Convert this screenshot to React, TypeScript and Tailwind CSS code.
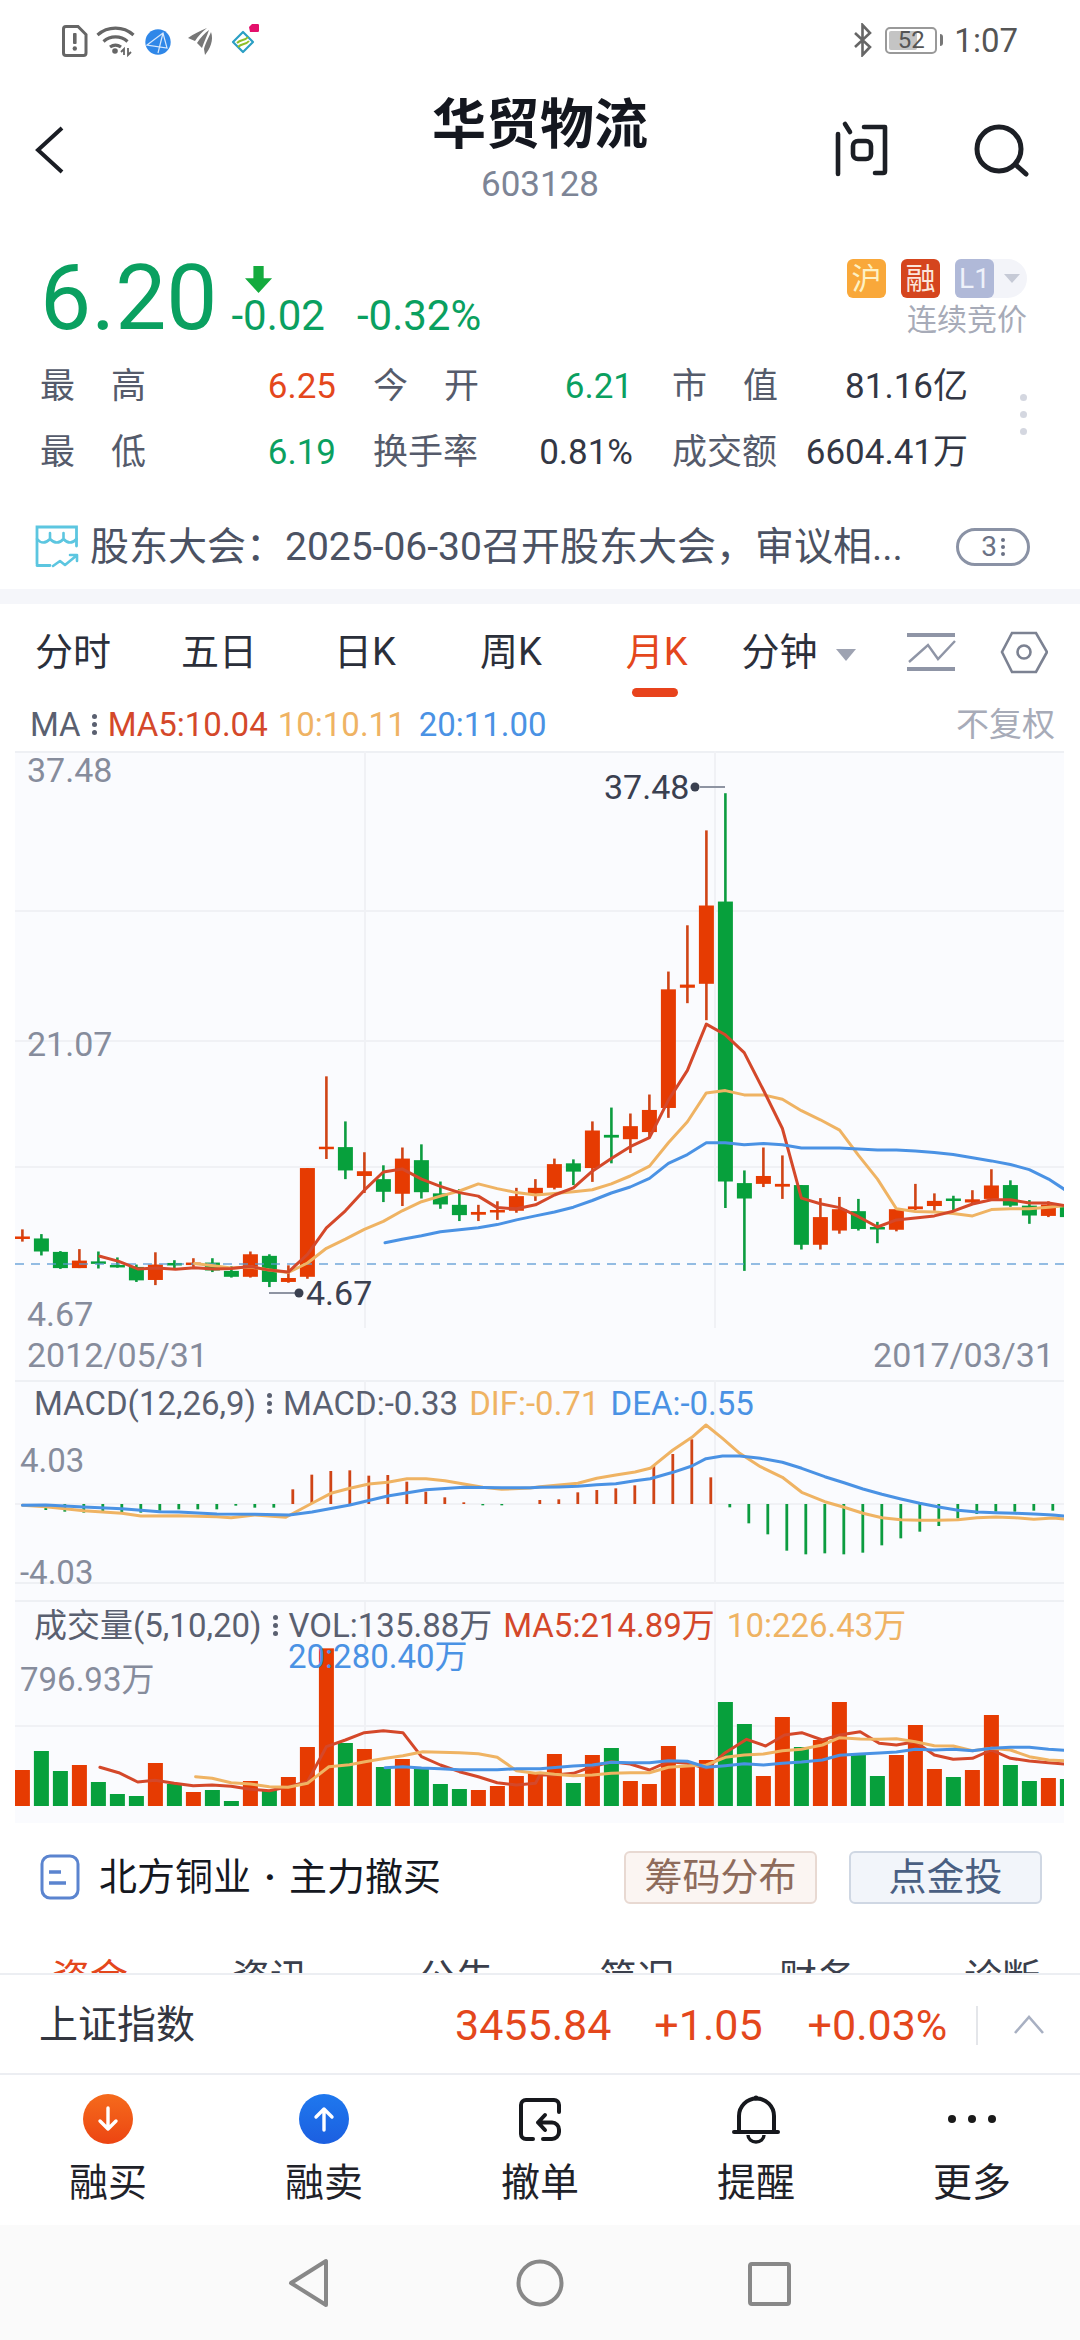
import React from "react";

type C = [number, number, number, number, number];
const R = 1, G = 0;
// zoom-space: [color, hi, top, bottom, lo]
const candles: C[] = [
  [R,1187,1205,1211,1218],[G,1199,1210,1243,1253],[G,1242,1244,1285,1287],[R,1237,1266,1285,1285],[G,1243,1268,1274,1286],
  [G,1258,1277,1282,1284],[G,1276,1282,1316,1320],[R,1245,1276,1315,1328],[G,1265,1272,1276,1285],[R,1260,1271,1276,1282],
  [G,1260,1271,1291,1295],[G,1280,1292,1307,1309],[R,1243,1250,1307,1309],[G,1250,1254,1320,1333],[R,1278,1310,1320,1322],
  [R,1032,1032,1307,1312],[R,800,978,984,1009],[G,914,979,1038,1060],[R,992,1040,1052,1095],[G,1025,1060,1092,1118],
  [R,980,1008,1097,1128],[G,972,1012,1093,1109],[G,1066,1096,1124,1135],[G,1085,1125,1151,1166],[R,1125,1143,1150,1166],
  [R,1116,1138,1143,1163],[R,1082,1103,1140,1145],[R,1060,1082,1097,1115],[R,1008,1022,1082,1086],[G,1010,1020,1041,1075],
  [R,914,937,1032,1067],[G,879,948,955,1020],[R,894,926,959,994],[R,846,885,941,955],[R,535,580,880,905],
  [R,418,568,576,615],[R,178,368,566,658],[G,84,358,1066,1133],[G,1038,1070,1109,1292],[R,980,1052,1072,1080],
  [R,1000,1072,1079,1110],[G,1075,1075,1226,1238],[R,1108,1156,1226,1238],[R,1105,1136,1190,1198],[G,1110,1141,1186,1190],
  [G,1168,1181,1187,1222],[R,1135,1136,1188,1192],[R,1072,1129,1136,1138],[R,1096,1115,1128,1140],[G,1102,1109,1115,1138],
  [R,1088,1111,1119,1122],[R,1035,1076,1110,1112],[G,1063,1075,1127,1130],[G,1113,1127,1152,1173],[R,1116,1124,1153,1156],
  [G,1130,1130,1156,1156],
];
const cx = (i: number) => 22.4 + 19 * i;
const my = (z: number) => 760 + z / 2.529;
const ly = (z: number) => 1360 + z / 3;

type P = number[][];
const pts = (left: P, right: P, yf: (z: number) => number) =>
  [...left.map(([x, y]) => `${(x / 2.904).toFixed(1)},${yf(y).toFixed(1)}`),
   ...right.map(([x, y]) => `${(540 + x / 2.904).toFixed(1)},${yf(y).toFixed(1)}`)].join(" ");

const ma5 = pts([[290,1255],[345,1268],[400,1287],[455,1285],[510,1288],[565,1284],[620,1287],[671,1286],[727,1281],[782,1290],[837,1295],[893,1250],[948,1183],[1003,1140],[1058,1088],[1113,1042],[1168,1034],[1224,1060],[1279,1078],[1334,1094],[1389,1103],[1444,1132],[1500,1135],[1555,1125]],
  [[42,1100],[97,1082],[152,1040],[207,1008],[262,978],[318,955],[373,860],[428,785],[483,668],[538,695],[593,740],[649,835],[704,932],[759,1108],[814,1122],[870,1132],[925,1155],[980,1181],[1035,1163],[1090,1158],[1145,1153],[1200,1141],[1256,1123],[1311,1112],[1366,1112],[1421,1120],[1477,1120],[1523,1127]], my);
const ma10 = pts([[565,1273],[620,1279],[671,1285],[727,1282],[782,1290],[837,1296],[893,1272],[948,1235],[1003,1212],[1058,1187],[1113,1167],[1168,1140],[1224,1117],[1279,1103],[1334,1090],[1389,1072],[1444,1084],[1500,1094],[1555,1100]],
  [[42,1096],[97,1092],[152,1087],[207,1072],[262,1052],[318,1027],[373,968],[428,915],[483,842],[538,836],[593,847],[649,847],[704,858],[759,887],[814,910],[870,936],[925,1000],[980,1060],[1035,1135],[1090,1142],[1145,1143],[1200,1147],[1256,1153],[1311,1137],[1366,1135],[1421,1135],[1477,1131],[1523,1127]], my);
const ma20 = pts([[1118,1221],[1168,1212],[1224,1203],[1279,1193],[1334,1188],[1389,1183],[1444,1175],[1500,1163],[1555,1153]],
  [[42,1143],[97,1131],[152,1114],[207,1095],[262,1080],[318,1058],[373,1020],[428,998],[483,968],[538,968],[593,973],[649,970],[704,973],[759,981],[814,981],[870,981],[925,984],[980,986],[1035,986],[1090,989],[1145,993],[1200,998],[1256,1006],[1311,1014],[1366,1023],[1421,1036],[1477,1060],[1523,1086]], my);

const macd = [450,455,458,459,459,458,452,448,448,448,437,443,443,388,344,333,331,347,345,365,395,412,427,436,436,432,420,418,397,390,385,376,318,282,238,352,442,490,523,572,583,580,583,578,556,535,515,498,475,462,455,455,452,452];
const dif = pts([[65,436],[133,440],[243,452],[354,460],[409,468],[519,467],[630,470],[671,473],[740,465],[830,472],[906,430],[961,400],[1016,385],[1071,372],[1126,367],[1182,356],[1237,356],[1292,362],[1347,372],[1402,382],[1457,388],[1540,384]],
  [[0,380],[55,375],[110,370],[165,355],[220,345],[276,336],[320,325],[386,270],[441,232],[482,195],[530,235],[580,280],[640,320],[704,352],[760,397],[827,425],[883,442],[938,460],[993,473],[1048,479],[1103,481],[1158,481],[1214,479],[1269,473],[1324,471],[1379,473],[1434,478],[1490,474],[1523,477]], ly);
const dea = pts([[65,436],[133,435],[243,441],[354,446],[464,455],[519,456],[630,462],[740,463],[840,465],[906,456],[1016,435],[1126,408],[1237,389],[1347,382],[1457,383],[1540,383]],
  [[0,382],[55,381],[110,379],[165,374],[220,371],[276,362],[320,356],[386,337],[441,318],[482,296],[530,288],[580,288],[640,295],[704,307],[760,325],[827,350],[883,368],[938,387],[993,403],[1048,417],[1103,430],[1158,441],[1214,451],[1269,456],[1324,458],[1379,460],[1434,462],[1490,465],[1523,468]], ly);

const vols = [1230,1173,1233,1215,1266,1302,1308,1209,1272,1296,1290,1323,1263,1290,1251,1161,865,1149,1167,1221,1197,1227,1272,1287,1290,1278,1248,1240,1182,1269,1185,1164,1263,1272,1158,1215,1200,1026,1092,1248,1071,1161,1140,1026,1185,1248,1185,1095,1227,1251,1230,1065,1215,1263,1254,1257];
const volRed = [1,0,0,1,0,0,0,1,0,1,0,0,1,0,1,1,1,0,1,0,1,0,0,0,1,1,1,1,1,0,1,0,1,1,1,1,1,0,0,1,1,0,1,1,0,0,1,1,1,0,1,1,0,0,1,0];
const v5 = pts([[290,1222],[345,1238],[400,1266],[450,1261],[506,1270],[561,1277],[616,1275],[671,1279],[727,1288],[782,1292],[837,1280],[893,1265],[948,1160],[1003,1140],[1058,1118],[1113,1112],[1170,1118],[1224,1190],[1279,1215],[1334,1235],[1389,1250],[1444,1268],[1500,1275],[1555,1270]],
  [[0,1245],[42,1245],[97,1240],[152,1220],[207,1205],[262,1212],[318,1230],[373,1205],[428,1210],[483,1225],[538,1178],[600,1138],[655,1158],[710,1125],[760,1118],[820,1140],[870,1125],[930,1115],[985,1150],[1035,1155],[1090,1145],[1145,1185],[1200,1198],[1256,1195],[1311,1170],[1366,1195],[1421,1203],[1477,1208],[1523,1212]], ly);
const v10 = pts([[568,1250],[616,1255],[671,1268],[727,1272],[782,1280],[837,1282],[893,1270],[955,1220],[1015,1214],[1060,1205],[1120,1195],[1170,1187],[1228,1175],[1279,1177],[1334,1178],[1389,1181],[1444,1192],[1500,1232],[1555,1240]],
  [[0,1238],[42,1243],[97,1247],[152,1245],[207,1240],[262,1238],[318,1238],[373,1222],[428,1218],[483,1215],[538,1192],[593,1185],[649,1182],[704,1172],[759,1168],[820,1155],[870,1133],[930,1137],[985,1138],[1035,1136],[1090,1145],[1145,1157],[1200,1158],[1256,1172],[1311,1165],[1366,1170],[1421,1190],[1477,1200],[1523,1202]], ly);
const v20 = pts([[1118,1223],[1170,1220],[1224,1224],[1279,1226],[1334,1229],[1389,1229],[1444,1229],[1500,1226],[1555,1226]],
  [[0,1226],[97,1218],[152,1215],[207,1207],[262,1208],[318,1208],[373,1202],[428,1204],[483,1222],[538,1217],[593,1211],[649,1215],[704,1210],[759,1206],[820,1200],[870,1186],[930,1182],[985,1179],[1035,1176],[1090,1168],[1145,1170],[1200,1168],[1256,1172],[1311,1165],[1366,1162],[1421,1162],[1477,1168],[1523,1171]], ly);

const RED = "#e63b02", GREEN = "#07a03c", WR = "#cf4416", WG = "#0c9c40";
const CL5 = "#d4482a", CL10 = "#efb363", CL20 = "#4a92e4", GRID = "#f0f1f5";

const Line = ({ p, c }: { p: string; c: string }) => (
  <polyline points={p} fill="none" stroke={c} strokeWidth={3} strokeLinejoin="round" strokeLinecap="round" />
);

const Dots = ({ c = "#5a6070" }: { c?: string }) => (
  <span className="inline-flex flex-col gap-[3px] mx-[11px] self-center">
    <span className="w-[5px] h-[5px] rounded-full" style={{ background: c }} />
    <span className="w-[5px] h-[5px] rounded-full" style={{ background: c }} />
    <span className="w-[5px] h-[5px] rounded-full" style={{ background: c }} />
  </span>
);

const StatusBar = () => (
  <div className="h-[80px] relative shrink-0 flex items-center justify-between pl-[61px] pr-[62px] text-[#555]">
    <svg width="200" height="40" viewBox="61 20 200 40">
      <path d="M66 26.500h12l8 8v18.500a2.500 2.500 0 0 1-2.500 2.500H66a2.500 2.500 0 0 1-2.500-2.500V29a2.500 2.500 0 0 1 2.500-2.500z" fill="none" stroke="#666" strokeWidth="3" />
      <rect x="73" y="33" width="3.600" height="11" rx="1" fill="#666" /><circle cx="74.800" cy="48.500" r="2.200" fill="#666" />
      <path d="M97.500 35a27 27 0 0 1 36 0M103.500 41.500a18 18 0 0 1 24 0M110 47a9.500 9.500 0 0 1 11 0" fill="none" stroke="#666" strokeWidth="3.200" />
      <circle cx="115" cy="51" r="2.800" fill="#666" />
      <path d="M124 55v-6l-3 3M128 48v7l3-3" fill="none" stroke="#666" strokeWidth="1.800" />
      <circle cx="158" cy="42" r="12.700" fill="#2f87e8" />
      <path d="M147 45l16-12 4 15zM163 33l-5 20M147 45l20 3" fill="none" stroke="#d7e8fc" strokeWidth="1.200" />
      <path d="M207 28c-7 3-14 6-19 10l7 3c3-5 7-9 12-13zM209 30c-4 3-9 8-12 13l5 5c2-6 5-12 7-18zM211 32c-2 5-6 12-7 17l1 6c5-6 9-15 6-23z" fill="#777" />
      <path d="M243 32l10 10-10 10-10-10z" fill="none" stroke="#2b9fc4" strokeWidth="2.200" strokeLinejoin="round" />
      <path d="M237 43c4-4 8-2 11-6M238 47c4-4 8-2 11-6" fill="none" stroke="#8fbf2a" strokeWidth="2" />
      <path d="M249 27l3-3h6a1.500 1.500 0 0 1 1 1v6a1.500 1.500 0 0 1-1 1h-8z" fill="#e3106b" />
    </svg>
    <div className="flex items-center">
      <svg width="24" height="34" viewBox="0 0 24 34" className="mr-[10px]">
        <path d="M4 10l15 14-7.500 8V2l7.500 8L4 24" fill="none" stroke="#666" strokeWidth="2.600" />
      </svg>
      <div className="w-[52px] h-[27px] rounded-[5px] border-2 border-[#999] p-[2px] relative">
        <div className="h-full w-[62%] rounded-[2px] bg-[#c4c4c4]" />
        <span className="absolute inset-0 flex items-center justify-center text-[24px] leading-none text-[#555]">52</span>
      </div>
      <div className="w-[3px] h-[12px] bg-[#777] ml-[3px] rounded-r-sm" />
      <span className="text-[33px] leading-none text-[#555] ml-[11px]">1:07</span>
    </div>
  </div>
);

const Header = () => (
  <div className="h-[130px] shrink-0 relative flex flex-col items-center">
    <div className="text-[54px] font-bold leading-none text-[#14171f] mt-[19px]">华贸物流</div>
    <div className="text-[35px] leading-none text-[#7d8596] mt-[14px]">603128</div>
    <svg className="absolute left-[30px] top-[42px]" width="40" height="60" viewBox="0 0 40 60">
      <path d="M32 6L8 28l24 22" fill="none" stroke="#1a1d24" strokeWidth="4" />
    </svg>
    <svg className="absolute left-[830px] top-[38px]" width="210" height="70" viewBox="830 118 210 70">
      <path d="M845 124l5 8M838 134v40M864 127h21v44q0 2-2 2h-8" fill="none" stroke="#1c1f25" strokeWidth="4.600" strokeLinecap="round" strokeLinejoin="round" />
      <rect x="853" y="141" width="18" height="18" rx="5" fill="none" stroke="#1c1f25" strokeWidth="4.600" />
      <circle cx="999" cy="149" r="22" fill="none" stroke="#1c1f25" strokeWidth="5" />
      <path d="M1016 165l10 9" stroke="#1c1f25" strokeWidth="5" strokeLinecap="round" />
    </svg>
  </div>
);

const StatDot = () => <span className="w-[7px] h-[7px] rounded-full bg-[#d4d7e0]" />;

const Quote = () => (
  <div className="h-[379px] shrink-0 relative">
    <div className="flex items-end pl-[40px] h-[128px]">
      <span className="text-[91px] leading-none text-[#0aa060] mb-[-6px]">6.20</span>
      <div className="relative flex items-end ml-[14px] text-[42px] leading-none text-[#0aa060] mb-[1px]">
        <svg className="absolute left-[14px] top-[-29px]" width="28" height="28" viewBox="0 0 30 30">
          <path d="M9 0h11v13h9L14.500 29 0 13h9z" fill="#14ab3e" />
        </svg>
        <span>-0.02</span>
        <span className="ml-[32px]">-0.32%</span>
      </div>
    </div>
    <div className="absolute right-[53px] top-[49px] flex flex-col items-end">
      <div className="flex">
        <div className="w-[39px] h-[39px] rounded-[6px] bg-[#f9a83a] text-[#fdf1c4] text-[30px] leading-[39px] text-center">沪</div>
        <div className="ml-[15px] w-[39px] h-[39px] rounded-[6px] bg-[#d5451e] text-[#fbe6dc] text-[30px] leading-[39px] text-center">融</div>
        <div className="ml-[15px] w-[72px] h-[39px] rounded-l-[6px] rounded-r-[20px] bg-[#f3f4f9] flex items-center">
          <div className="w-[39px] h-[39px] rounded-[6px] bg-[#b0b9d8] text-[#eef1fa] text-[28px] leading-[39px] text-center">L1</div>
          <div className="ml-[10px] w-0 h-0 border-x-[8px] border-x-transparent border-t-[9px] border-t-[#c6cad6]" />
        </div>
      </div>
      <div className="text-[30px] leading-none text-[#a7abb8] mt-[7px]">连续竞价</div>
    </div>
    <div className="absolute left-[40px] top-[144px] grid grid-cols-[296px_258px_296px] gap-x-[39px] text-[35px] leading-[66px] text-[#555b6b]">
      <div className="flex justify-between"><span className="flex justify-between w-[106px]"><span>最</span><span>高</span></span><span className="text-[#e4471c]">6.25</span></div>
      <div className="flex justify-between"><span className="flex justify-between w-[106px] -ml-[2px]"><span>今</span><span>开</span></span><span className="text-[#0aa060]">6.21</span></div>
      <div className="flex justify-between"><span className="flex justify-between w-[106px]"><span>市</span><span>值</span></span><span className="text-[#333744]">81.16亿</span></div>
      <div className="flex justify-between"><span className="flex justify-between w-[106px]"><span>最</span><span>低</span></span><span className="text-[#0aa060]">6.19</span></div>
      <div className="flex justify-between"><span className="w-[106px] whitespace-nowrap -ml-[2px]">换手率</span><span className="text-[#333744]">0.81%</span></div>
      <div className="flex justify-between"><span className="w-[106px] whitespace-nowrap">成交额</span><span className="text-[#333744]">6604.41万</span></div>
    </div>
    <div className="absolute left-[1020px] top-[184px] flex flex-col gap-[10px]"><StatDot /><StatDot /><StatDot /></div>
    <div className="absolute left-[35px] top-[315px] w-[995px] h-[44px] flex items-center">
      <svg width="44" height="44" viewBox="35 522 44 44">
        <path d="M37 561V524h39.500v19M37 562.500h13" fill="none" stroke="#5cc6e0" strokeWidth="2.800" strokeLinecap="round" />
        <path d="M37 536q6 7 13 0q7 7 13.500 0q6.500 7 13 0M50 530v6M63.500 530v6" fill="none" stroke="#5cc6e0" strokeWidth="2.600" strokeLinecap="round" />
        <path d="M53 563l7-5 5 4 11-9M70 552h7v6" fill="none" stroke="#5cc6e0" strokeWidth="2.600" strokeLinecap="round" strokeLinejoin="round" />
      </svg>
      <span className="text-[39px] leading-none text-[#4b5263] ml-[11px] whitespace-nowrap">股东大会：2025-06-30召开股东大会，审议相...</span>
      <div className="ml-auto w-[74px] h-[38px] rounded-full border-[3px] border-[#8a92a5] text-[28px] leading-none text-[#6b7285] flex items-center justify-center gap-[4px]">
        3
        <span className="flex flex-col gap-[3px]"><span className="w-[4px] h-[4px] rounded-full bg-[#6b7285]" /><span className="w-[4px] h-[4px] rounded-full bg-[#6b7285]" /><span className="w-[4px] h-[4px] rounded-full bg-[#6b7285]" /></span>
      </div>
    </div>
  </div>
);

const Tabs = () => (
  <div className="h-[96px] shrink-0 flex items-center text-[38px] leading-none text-[#2b2f3a] whitespace-nowrap">
    <span className="ml-[35px]">分时</span>
    <span className="ml-[70px]">五日</span>
    <span className="ml-[77px]">日K</span>
    <span className="ml-[84px]">周K</span>
    <span className="ml-[84px] relative text-[#e4471c]">月K
      <span className="absolute left-[6px] top-[55px] w-[46px] h-[9px] rounded-full bg-[#e8431c]" />
    </span>
    <span className="ml-[54px]">分钟</span>
    <span className="ml-[18px] mt-[6px] w-0 h-0 border-x-[10px] border-x-transparent border-t-[12px] border-t-[#9ea3b2]" />
    <svg className="ml-[48px]" width="144" height="44" viewBox="904 628 144 44">
      <path d="M907 633h48M907 667h48" stroke="#8f95a6" strokeWidth="4" />
      <path d="M909 660l19-17 10 14 17-18" fill="none" stroke="#8f95a6" strokeWidth="2.400" />
      <path d="M1012 631h24l11 19-11 20h-24l-10-20z" fill="none" stroke="#7c8292" strokeWidth="2.600" />
      <circle cx="1024" cy="650" r="6.500" fill="none" stroke="#7c8292" strokeWidth="2.600" />
    </svg>
  </div>
);

const MainChart = () => (
  <div className="relative h-[577px] border-t-2 border-[#eef0f4] bg-[#fafbfe] box-border text-[34px] leading-none">
    <svg className="absolute left-0 top-[-2px]" width="1049" height="577" viewBox="15 751 1049 577">
      {[911, 1041, 1167].map((y) => <path key={y} d={`M15 ${y}H1064`} stroke={GRID} strokeWidth="2" />)}
      {[365, 715].map((x) => <path key={x} d={`M${x} 751V1328`} stroke={GRID} strokeWidth="2" />)}
      {candles.map(([c, hi, t, b, lo], i) => {
        const x = cx(i), col = c ? RED : GREEN, wc = c ? WR : WG;
        return (
          <g key={i}>
            <rect x={x - 1.3} y={my(hi)} width={2.6} height={my(lo) - my(hi)} fill={wc} />
            <rect x={x - 7.5} y={my(t)} width={15} height={Math.max(my(b) - my(t), 2.5)} fill={col} />
          </g>
        );
      })}
      <path d="M15 1264H1064" stroke="#5b9bd5" strokeWidth="1.600" strokeDasharray="9 7" opacity="0.85" />
      <Line p={ma10} c={CL10} />
      <Line p={ma5} c={CL5} />
      <Line p={ma20} c={CL20} />
      <path d="M269 1293h26M700 787h25" stroke="#8e94a2" strokeWidth="1.800" />
      <circle cx="299" cy="1293" r="4.500" fill="#3a4050" /><circle cx="695" cy="787" r="4.500" fill="#3a4050" />
    </svg>
    <span className="absolute left-[12px] top-0 text-[#868c9c]">37.48</span>
    <span className="absolute left-[12px] top-[274px] text-[#868c9c]">21.07</span>
    <span className="absolute left-[12px] top-[544px] text-[#868c9c]">4.67</span>
    <span className="absolute left-[291px] top-[523px] text-[#3a4050]">4.67</span>
    <span className="absolute left-[589px] top-[17px] text-[#3a4050]">37.48</span>
  </div>
);

const MacdChart = () => (
  <div className="relative h-[204px] border-y-2 border-[#eef0f4] text-[33px] leading-none">
    <svg className="absolute left-0 top-[-2px]" width="1049" height="204" viewBox="15 1380 1049 204">
      <path d="M15 1504H1064" stroke={GRID} strokeWidth="2" />
      {[365, 715].map((x) => <path key={x} d={`M${x} 1380V1584`} stroke={GRID} strokeWidth="2" />)}
      {macd.map((z, k) => {
        const x = 45.8 + 19 * k;
        const up = z < 432;
        return <rect key={k} x={x - 1.4} y={ly(Math.min(z, 432))} width={2.8} height={Math.abs(ly(z) - ly(432))} fill={up ? WR : WG} />;
      })}
      <Line p={dif} c={CL10} />
      <Line p={dea} c={CL20} />
    </svg>
    <div className="relative flex items-center whitespace-nowrap pl-[19px] pt-[6px] h-[36px]">
      <span className="text-[#5a6070]">MACD(12,26,9)</span><Dots />
      <span className="text-[#5a6070]">MACD:-0.33</span>
      <span className="text-[#efb363] ml-[11px]">DIF:-0.71</span>
      <span className="text-[#4a92e4] ml-[11px]">DEA:-0.55</span>
    </div>
    <span className="absolute left-[5px] top-[62px] text-[#868c9c]">4.03</span>
    <span className="absolute left-[5px] top-[174px] text-[#868c9c]">-4.03</span>
  </div>
);

const VolChart = () => (
  <div className="relative h-[221px] text-[33px] leading-none">
    <svg className="absolute left-0 top-0" width="1049" height="206" viewBox="15 1602 1049 206">
      <path d="M15 1726H1064" stroke={GRID} strokeWidth="2" />
      {[365, 715].map((x) => <path key={x} d={`M${x} 1602V1806`} stroke={GRID} strokeWidth="2" />)}
      {vols.map((z, i) => (
        <rect key={i} x={cx(i) - 7.5} y={ly(z)} width={15} height={1806 - ly(z)} fill={volRed[i] ? RED : GREEN} />
      ))}
      <Line p={v5} c={CL5} />
      <Line p={v10} c={CL10} />
      <Line p={v20} c={CL20} />
    </svg>
    <div className="relative flex items-center whitespace-nowrap pl-[19px] pt-[6px] h-[40px]">
      <span className="text-[#5a6070]">成交量(5,10,20)</span><Dots />
      <span className="text-[#5a6070]">VOL:135.88万</span>
      <span className="text-[#d4482a] ml-[11px]">MA5:214.89万</span>
      <span className="text-[#efb363] ml-[12px]">10:226.43万</span>
    </div>
    <span className="absolute left-[273px] top-[38px] text-[#4a92e4]">20:280.40万</span>
    <span className="absolute left-[5px] top-[61px] text-[#868c9c]">796.93万</span>
  </div>
);

const Charts = () => (
  <div className="ml-[15px] w-[1049px] bg-[#fafbfe] overflow-hidden">
    <MainChart />
    <div className="h-[52px] pt-[2px] flex items-center justify-between pl-[12px] pr-[10px] text-[34px] leading-none text-[#868c9c]">
      <span>2012/05/31</span><span>2017/03/31</span>
    </div>
    <MacdChart />
    <div className="h-[16px]" />
    <div className="border-t-2 border-[#eef0f4]"><VolChart /></div>
  </div>
);

const Promo = () => (
  <div className="h-[108px] flex items-center pl-[40px] pr-[38px]">
    <svg width="40" height="46" viewBox="0 0 40 46">
      <rect x="2" y="2" width="36" height="42" rx="8" fill="none" stroke="#5b84cf" strokeWidth="3" />
      <path d="M9 18h12M9 29h17" stroke="#5b84cf" strokeWidth="3.400" />
    </svg>
    <span className="text-[38px] leading-none text-[#15181f] ml-[19px] whitespace-nowrap flex items-center">
      北方铜业<span className="w-[38px] text-center font-bold">·</span>主力撤买
    </span>
    <div className="ml-auto flex gap-[32px]">
      <div className="w-[193px] h-[53px] rounded-[6px] border-2 border-[#e8d9d2] bg-[#fbf5f2] text-[38px] leading-none text-[#8e6b5b] flex items-center justify-center">筹码分布</div>
      <div className="w-[193px] h-[53px] rounded-[6px] border-2 border-[#cfd7e3] bg-[#f2f5fa] text-[38px] leading-none text-[#4a5f82] flex items-center justify-center">点金投</div>
    </div>
  </div>
);

const ClippedTabs = () => (
  <div className="flex text-[38px] leading-none text-[#3b3f4c] mt-[28px] whitespace-nowrap">
    <span className="ml-[52px] text-[#e4471c]">资金</span>
    <span className="ml-[104px]">资讯</span>
    <span className="ml-[110px]">公告</span>
    <span className="ml-[105px]">简况</span>
    <span className="ml-[104px]">财务</span>
    <span className="ml-[109px]">诊断</span>
  </div>
);

const IndexBar = () => (
  <div className="h-[102px] shrink-0 bg-white border-t-2 border-b-2 border-[#eceef2] flex items-center pl-[39px] pt-[2px]">
    <span className="text-[39px] leading-none text-[#33363f]">上证指数</span>
    <span className="text-[43px] leading-none text-[#e4471c] ml-[260px]">3455.84</span>
    <span className="text-[43px] leading-none text-[#e4471c] ml-[43px]">+1.05</span>
    <span className="text-[43px] leading-none text-[#e4471c] ml-[45px]">+0.03%</span>
    <div className="w-[2px] h-[39px] bg-[#e4e6ea] ml-[29px]" />
    <svg className="ml-[35px]" width="32" height="20" viewBox="0 0 32 20"><path d="M2 18L16 2l14 16" fill="none" stroke="#a8b0c2" strokeWidth="2.600" /></svg>
  </div>
);

const Tool = ({ icon, label }: { icon: React.ReactNode; label: string }) => (
  <div className="w-[216px] flex flex-col items-center">
    <div className="h-[50px] flex items-center justify-center">{icon}</div>
    <span className="text-[39px] leading-none text-[#1f2229] mt-[20px]">{label}</span>
  </div>
);

const Toolbar = () => (
  <div className="h-[150px] shrink-0 bg-white flex pt-[19px]">
    <Tool label="融买" icon={<div className="w-[50px] h-[50px] rounded-full bg-gradient-to-b from-[#f56a1c] to-[#ec4412] flex items-center justify-center"><svg width="24" height="28" viewBox="0 0 24 28"><path d="M12 3v21M4 16l8 8 8-8" fill="none" stroke="#fff" strokeWidth="3.400" strokeLinecap="round" strokeLinejoin="round" /></svg></div>} />
    <Tool label="融卖" icon={<div className="w-[50px] h-[50px] rounded-full bg-gradient-to-b from-[#1f78ee] to-[#1c5fe0] flex items-center justify-center"><svg width="24" height="28" viewBox="0 0 24 28"><path d="M12 25V4M4 12l8-8 8 8" fill="none" stroke="#fff" strokeWidth="3.400" strokeLinecap="round" strokeLinejoin="round" /></svg></div>} />
    <Tool label="撤单" icon={<svg width="44" height="46" viewBox="518 2097 44 46">
      <path d="M533 2140H526a5 5 0 0 1-5-5V2106a5 5 0 0 1 5-5H554a5 5 0 0 1 5 5V2113" fill="none" stroke="#16181d" strokeWidth="4" strokeLinecap="round" />
      <path d="M545 2116l-7 7.500 7 7.500M538 2123.500H552a7 7 0 0 1 7 7V2133a7 7 0 0 1-7 7H543" fill="none" stroke="#16181d" strokeWidth="4" strokeLinecap="round" strokeLinejoin="round" />
    </svg>} />
    <Tool label="提醒" icon={<svg width="50" height="50" viewBox="731 2095 50 50">
      <path d="M739 2133V2117a17.500 17.500 0 0 1 35 0V2133M734 2133H778" fill="none" stroke="#16181d" strokeWidth="4" strokeLinecap="round" />
      <path d="M748 2136a8 7 0 0 0 16 0" fill="none" stroke="#16181d" strokeWidth="3.400" />
      <circle cx="756" cy="2099" r="2.500" fill="#16181d" />
    </svg>} />
    <Tool label="更多" icon={<div className="flex gap-[12px]"><span className="w-[8px] h-[8px] rounded-full bg-[#1a1a1a]" /><span className="w-[8px] h-[8px] rounded-full bg-[#1a1a1a]" /><span className="w-[8px] h-[8px] rounded-full bg-[#1a1a1a]" /></div>} />
  </div>
);

const NavBar = () => (
  <div className="h-[115px] shrink-0 bg-[#fafafa] flex items-center justify-center">
    <svg width="520" height="60" viewBox="280 2252 520 60">
      <path d="M326 2260v44l-35-22z" fill="none" stroke="#888" strokeWidth="4" strokeLinejoin="round" />
      <circle cx="540" cy="2282" r="21.500" fill="none" stroke="#888" strokeWidth="4" />
      <rect x="750" y="2263" width="39" height="40" rx="2" fill="none" stroke="#888" strokeWidth="4" />
    </svg>
  </div>
);

export default function App() {
  return (
    <div className="w-[1080px] h-[2340px] bg-white overflow-hidden flex flex-col font-['Roboto','Noto_Sans_CJK_SC',sans-serif]">
      <StatusBar />
      <Header />
      <Quote />
      <div className="h-[15px] shrink-0 bg-[#f5f6fa]" />
      <Tabs />
      <div className="h-[51px] shrink-0 flex items-center justify-between pl-[30px] pr-[25px] pb-[3px] text-[33px] leading-none whitespace-nowrap">
        <div className="flex items-center">
          <span className="text-[#5a6070]">MA</span><Dots />
          <span className="text-[#d4482a]">MA5:10.04</span>
          <span className="text-[#efb363] ml-[10px]">10:10.11</span>
          <span className="text-[#4a92e4] ml-[13px]">20:11.00</span>
        </div>
        <span className="text-[#a7abb8]">不复权</span>
      </div>
      <div className="flex-1 overflow-hidden">
        <Charts />
        <Promo />
        <ClippedTabs />
      </div>
      <IndexBar />
      <Toolbar />
      <NavBar />
    </div>
  );
}
